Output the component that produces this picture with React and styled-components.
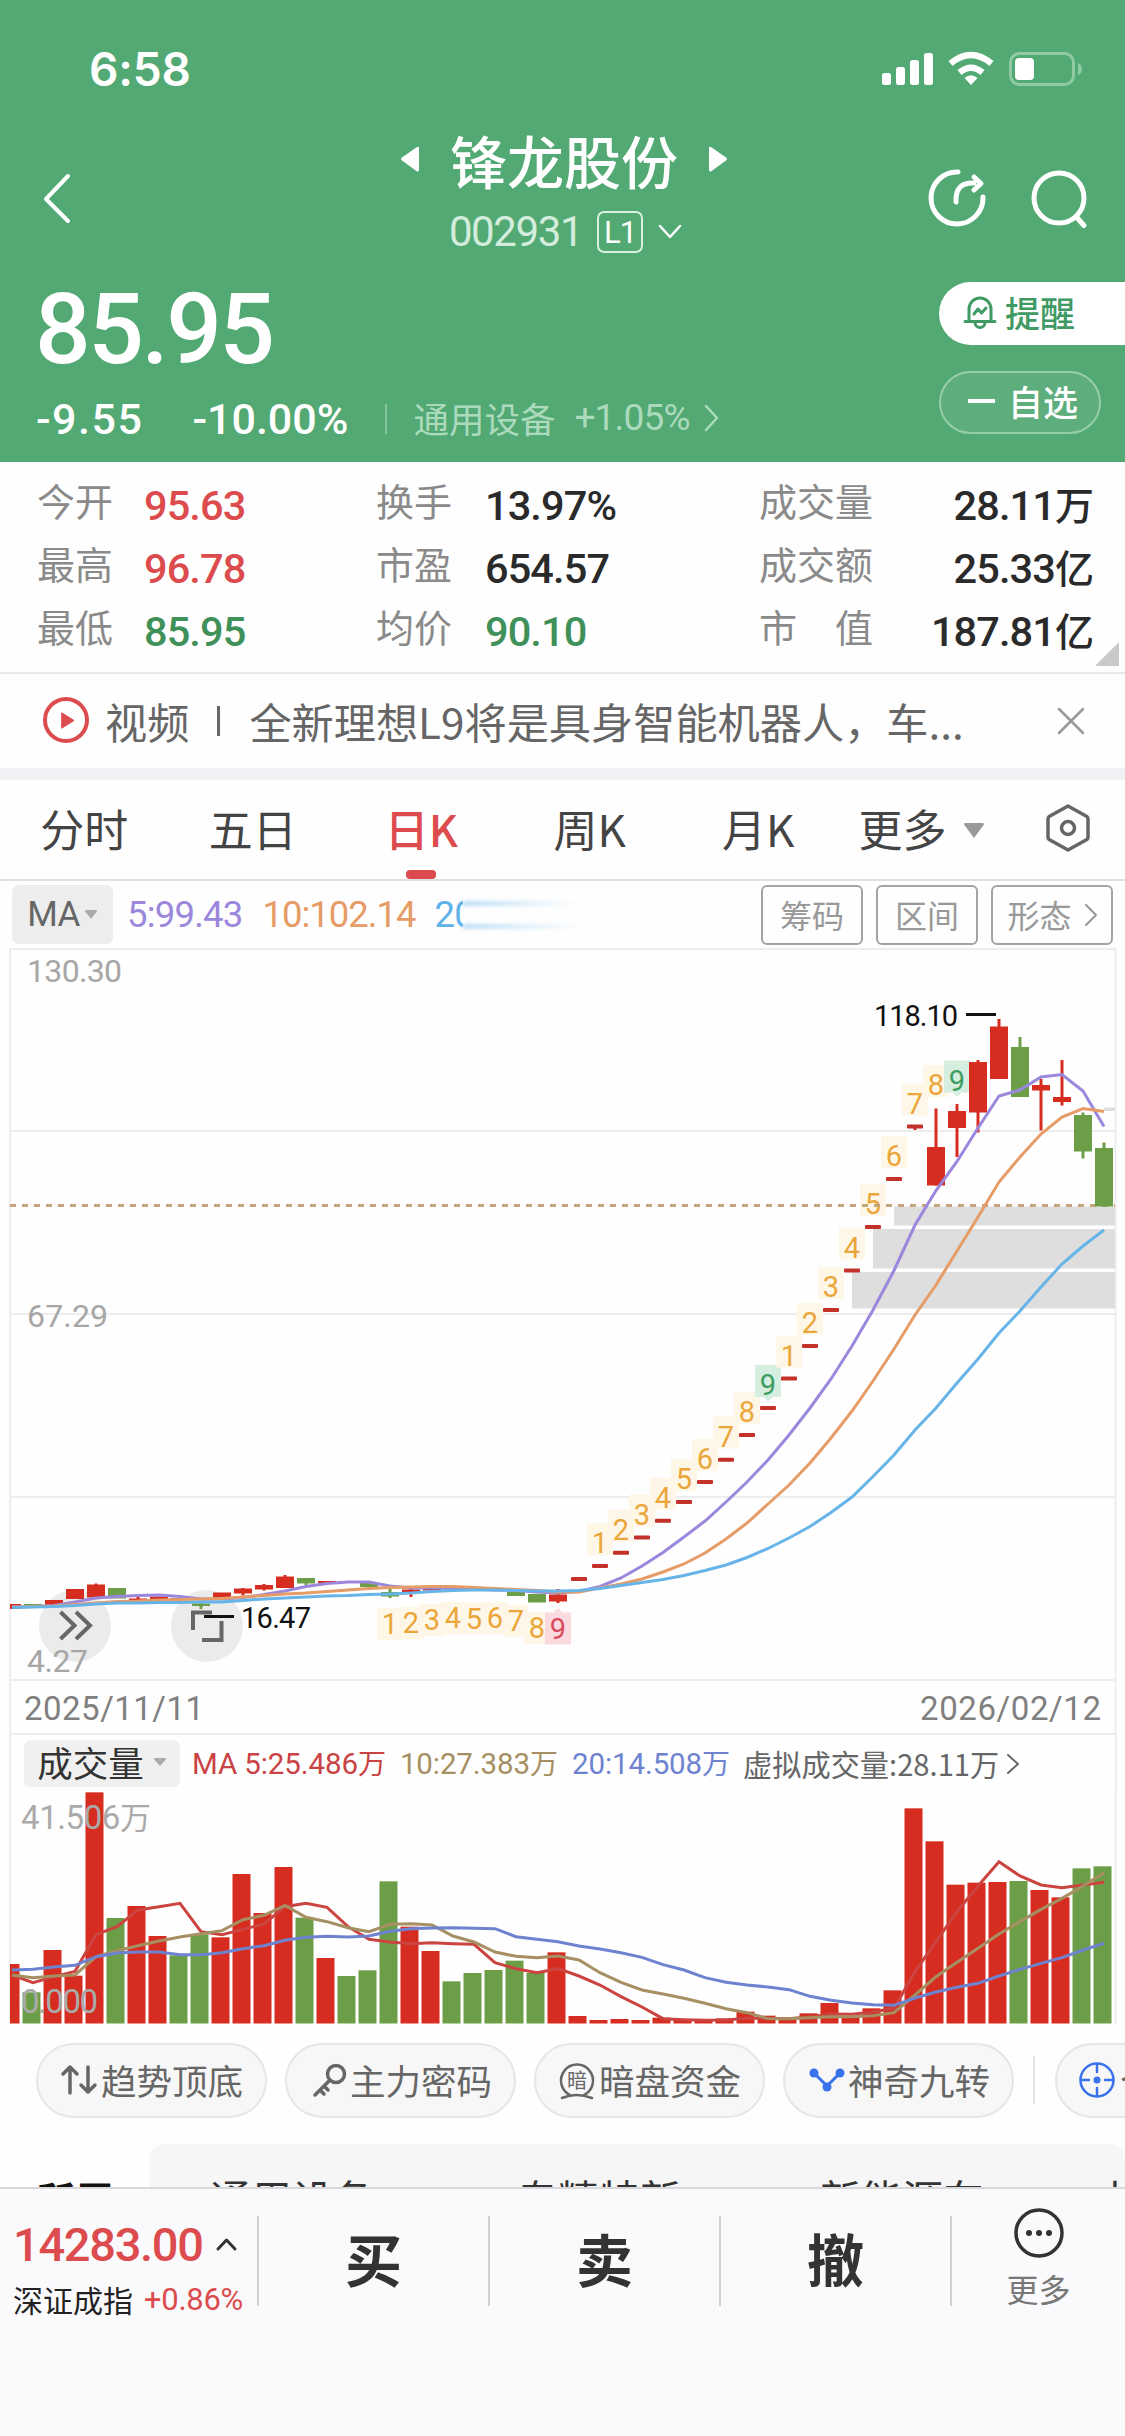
import { styled, createGlobalStyle } from "styled-components";

const GlobalStyle = createGlobalStyle`
  * {
    box-sizing: border-box;
  }
  body {
    margin: 0;
    background: #fefefe;
    font-family: "Noto Sans CJK SC", sans-serif;
  }
`;

const RED = "#d62d20";
const GREEN = "#6c9e48";
const numFont = `Roboto, "Noto Sans CJK SC", sans-serif`;

const Page = styled.div`
  width: 1125px;
  height: 2436px;
  overflow: hidden;
  display: flex;
  flex-direction: column;
`;

const Num = styled.span`
  font-family: ${numFont};
  font-size: ${(p) => p.$size}px;
  font-weight: ${(p) => p.$weight || 400};
  font-stretch: 88%;
  letter-spacing: ${(p) => p.$gap || 0}px;
  color: ${(p) => p.$color || "inherit"};
  line-height: 1;
  white-space: nowrap;
`;

const Unit = styled.span`
  font-size: ${(p) => p.$size}px;
  letter-spacing: 0;
`;

/* ---------- header ---------- */

const Header = styled.header`
  height: 462px;
  flex: none;
  background: #52a973;
  color: #fff;
`;

const StatusBar = styled.div`
  height: 138px;
  display: flex;
  align-items: center;
  justify-content: space-between;
  padding: 0 43px 0 89px;
`;

const Clock = styled.span`
  font-family: Inter, sans-serif;
  font-size: 46px;
  font-weight: 600;
  line-height: 1;
  letter-spacing: -0.2px;
`;

const NavBar = styled.div`
  height: 144px;
  display: grid;
  grid-template-columns: 1fr auto 1fr;
  padding: 0 37px 0 40px;
`;

const NavSide = styled.div`
  height: 120px;
  display: flex;
  align-items: center;
  justify-content: ${(p) => (p.$end ? "flex-end" : "flex-start")};
  gap: 44px;
`;

const NavCenter = styled.div`
  display: flex;
  flex-direction: column;
  align-items: center;
`;

const NavTitle = styled.div`
  height: 42px;
  display: flex;
  align-items: center;
  gap: 30px;
  font-size: 57px;
  font-weight: 500;
  line-height: 42px;
`;

const NavCode = styled.div`
  height: 104px;
  display: flex;
  align-items: center;
  padding-left: 3px;
`;

const Level = styled.span`
  width: 46px;
  height: 42px;
  margin: 0 15px 0 15px;
  border: 2px solid #d9efe1;
  border-radius: 7px;
  display: flex;
  align-items: center;
  justify-content: center;
`;

const Quote = styled.div`
  display: flex;
  justify-content: space-between;
`;

const Price = styled.div`
  height: 96px;
  padding-left: 35px;
  display: flex;
  align-items: center;
`;

const Change = styled.div`
  height: 82px;
  padding-left: 36px;
  display: flex;
  align-items: center;
`;

const Separator = styled.i`
  width: 2px;
  height: ${(p) => p.$height}px;
  background: ${(p) => p.$color};
`;

const Sector = styled.span`
  display: flex;
  align-items: center;
  margin-left: 26px;
  padding-bottom: 3px;
  color: #acdabd;
  font-size: 35.5px;
  line-height: 1;
`;

const Actions = styled.div`
  width: 186px;
  display: flex;
  flex-direction: column;
  gap: 26px;
`;

const Pill = styled.div`
  height: 63px;
  display: flex;
  align-items: center;
  font-size: 35px;
  font-weight: 500;
  line-height: 1;
  padding-bottom: 4px;
`;

const AlertPill = styled(Pill)`
  background: #fff;
  color: #3f9a63;
  border-radius: 32px 0 0 32px;
  padding-left: 24px;
  gap: 8px;
`;

const WatchPill = styled(Pill)`
  width: 162px;
  border: 2px solid #96ceaa;
  background: #5dae7c;
  border-radius: 32px;
  padding-left: 26px;
  gap: 12px;
`;

/* ---------- stats ---------- */

const Stats = styled.section`
  height: 212px;
  flex: none;
  display: grid;
  grid-template-columns: 339px 383px 334px;
  grid-auto-rows: 63px;
  padding: 12px 31px 0 38px;
  border-bottom: 2px solid #e9e9e9;
  position: relative;
`;

const Stat = styled.div`
  display: flex;
  align-items: center;
  justify-content: ${(p) => (p.$spread ? "space-between" : "flex-start")};
`;

const StatLabel = styled.span`
  min-width: ${(p) => p.$width}px;
  margin-left: -1px;
  padding-bottom: 11px;
  font-size: 38px;
  line-height: 1;
  color: #8a8a8a;
  white-space: pre;
`;

const Corner = styled.i`
  position: absolute;
  right: 6px;
  bottom: 6px;
  border: 12px solid #c9c9c9;
  border-top-color: transparent;
  border-left-color: transparent;
`;

/* ---------- news ---------- */

const News = styled.section`
  height: 106px;
  flex: none;
  border-bottom: 12px solid #f1f2f6;
  display: flex;
  align-items: center;
  padding: 0 40px 0 42px;
  color: #666;
  font-size: 42.2px;
  line-height: 1;
`;

const NewsTag = styled.span`
  margin: 0 28px 0 15px;
`;

const NewsText = styled.span`
  flex: 1;
  margin-left: 29px;
  white-space: nowrap;
`;

/* ---------- tabs ---------- */

const Tabs = styled.nav`
  height: 101px;
  flex: none;
  display: flex;
  align-items: stretch;
  border-bottom: 2px solid #e0e0e0;
`;

const Tab = styled.div`
  width: 168.5px;
  display: flex;
  flex-direction: column;
  align-items: center;
  justify-content: space-between;
  padding-top: 23px;
  font-size: 44px;
  line-height: 50px;
  font-weight: ${(p) => (p.$active ? 500 : 400)};
  color: ${(p) => (p.$active ? "#dc4b4d" : "#444")};

  &::after {
    content: "";
    width: 30px;
    height: 9px;
    border-radius: 4px;
    background: ${(p) => (p.$active ? "#dc4b4d" : "transparent")};
  }
`;

const MoreTab = styled.div`
  flex: 1;
  display: flex;
  align-items: center;
  padding: 0 35px 4px 16px;
  font-size: 44px;
  line-height: 50px;
  color: #444;
`;

const Caret = styled.i`
  border: ${(p) => p.$size}px solid transparent;
  border-top: ${(p) => p.$height}px solid ${(p) => p.$color};
  border-bottom: 0;
  border-radius: 3px;
`;

const Grow = styled.span`
  flex: 1;
`;

/* ---------- indicator bar ---------- */

const IndicatorBar = styled.div`
  height: 67px;
  flex: none;
  display: flex;
  align-items: flex-start;
  padding: 4px 12px 0 12px;
`;

const Chip = styled.div`
  width: 101px;
  height: 59px;
  border-radius: 7px;
  background: #ededed;
  display: flex;
  align-items: center;
  justify-content: center;
  gap: 4px;
  color: #666;
`;

const Legend = styled.div`
  flex: 1;
  height: 60px;
  display: flex;
  align-items: center;
`;

const Cut = styled.span`
  width: 28px;
  height: 32px;
  overflow: hidden;
  display: flex;
  align-items: center;
`;

const Smear = styled.span`
  width: 116px;
  height: 26px;
  background:
    linear-gradient(to right, #8cc8f0, transparent) top / 100% 3px no-repeat,
    linear-gradient(to right, #8cc8f0, transparent) bottom / 100% 3px no-repeat;
  filter: blur(2px);
`;

const Tool = styled.div`
  width: ${(p) => p.$width}px;
  height: 60px;
  margin-left: 13px;
  border: 2px solid #a3a3a3;
  border-radius: 6px;
  display: flex;
  align-items: center;
  justify-content: center;
  gap: 13px;
  padding-bottom: 3px;
  font-size: 32px;
  line-height: 1;
  color: #999;
`;

const Svg = styled.svg`
  display: block;
  flex: none;
  overflow: visible;
`;

const ChartSvg = styled(Svg)`
  font-family: ${numFont};
  font-stretch: 88%;
  overflow: hidden;
`;

/* ---------- volume ---------- */

const VolumeBar = styled.div`
  height: 56px;
  flex: none;
  margin: 0 8.5px 0 9px;
  border: solid #ededed;
  border-width: 0 2px;
  display: flex;
  align-items: flex-start;
  padding: 5px 0 0 13px;
`;

const VolumeChip = styled(Chip)`
  width: 156px;
  height: 47px;
  background: #f0f0f0;
  padding-bottom: 3px;
  font-size: 35.5px;
  line-height: 1;
  color: #333;
  gap: 9px;
`;

const VolumeLegend = styled(Legend)`
  height: 50px;
  padding-left: 12px;
`;

const Virtual = styled.span`
  display: flex;
  align-items: center;
  gap: 8px;
  margin-left: 13px;
  padding-bottom: 2px;
  font-size: 29.2px;
  line-height: 1;
  color: #666;
`;

/* ---------- tools ---------- */

const Shortcuts = styled.div`
  height: 120px;
  flex: none;
  display: flex;
  align-items: flex-start;
  gap: 18px;
  padding: 19px 0 0 36px;
  overflow: hidden;
`;

const Shortcut = styled.div`
  width: 231px;
  height: 75px;
  flex: none;
  border: 2px solid #e6e6e6;
  border-radius: 38px;
  background: #f7f7f7;
  display: flex;
  align-items: center;
  padding: 0 0 2px 23px;
  font-size: 35.5px;
  line-height: 1;
  color: #666;
`;

const ShortcutDivider = styled.i`
  width: 2px;
  height: 48px;
  flex: none;
  margin: 13px 2px 0 1px;
  background: #e3e3e3;
`;

const Concepts = styled.div`
  height: 43px;
  flex: none;
  display: flex;
  overflow: hidden;
`;

const ConceptTitle = styled.div`
  width: 150px;
  padding: 29px 0 0 36px;
  font-size: 39px;
  font-weight: 700;
  line-height: 50px;
  color: #111;
`;

const ConceptList = styled.div`
  width: 975px;
  flex: none;
  height: 100px;
  border-radius: 14px 14px 0 0;
  background: #f6f6f7;
  display: grid;
  grid-template-columns: 307px 303px 288px 100px;
  padding: 28px 0 0 60px;
  font-size: 41px;
  line-height: 50px;
  color: #333;
`;

/* ---------- bottom bar ---------- */

const BottomBar = styled.footer`
  flex: 1;
  border-top: 2px solid #d9d9db;
  background: #fafafc;
  display: flex;
  align-items: flex-start;
  padding-top: 27px;
`;

const Index = styled.div`
  width: 259px;
  height: 90px;
  padding-left: 13px;
  border-right: 2px solid #d0d0d2;
`;

const IndexValue = styled.div`
  height: 56px;
  display: flex;
  align-items: center;
  gap: 13px;
`;

const IndexName = styled.div`
  height: 54px;
  display: flex;
  align-items: center;
  gap: 11px;
  font-size: 30px;
  line-height: 1;
  color: #222;
`;

const Trade = styled.div`
  width: 231px;
  height: 90px;
  border-right: 2px solid #d0d0d2;
  text-align: center;
  font-size: 57px;
  font-weight: 700;
  line-height: 82px;
  color: #333;
`;

const More = styled.div`
  flex: 1;
  display: flex;
  flex-direction: column;
  align-items: center;
  margin-top: -8px;
  gap: 12px;
  font-size: 32px;
  line-height: 36px;
  color: #777;
`;

/* ---------- data ---------- */

// x of the i-th trading day
const dayX = (i) => 12 + i * 21;

// [up, bodyTop, bodyBottom, high, low]
const candles = [
  [1, 1604, 1609], [0, 1604, 1606], [1, 1600, 1605.5], [1, 1589, 1599],
  [1, 1584.5, 1597.5, 1583.5, 1598], [0, 1588, 1598.5], [1, 1598.5, 1600.5, 1596.5, 1600.5],
  [1, 1596.5, 1599], [1, 1598, 1600], [0, 1603.5, 1606, 1603, 1609], [1, 1592.5, 1597.5],
  [1, 1588.5, 1593.5, 1588, 1595.5], [1, 1585, 1589.5, 1584, 1590.5],
  [1, 1576.5, 1588, 1575, 1588], [0, 1578, 1583.5, 1578, 1585.5], [1, 1581, 1583],
  [1, 1581.5, 1583], [0, 1583, 1587], [0, 1592, 1596.5, 1589, 1598],
  [1, 1589.5, 1592, 1589, 1597], [1, 1588.5, 1590.5], [1, 1587.5, 1589.5], [0, 1588.5, 1590.5],
  [0, 1589, 1591], [0, 1591.5, 1596], [0, 1594, 1602.5],
  [1, 1594.5, 1601.5, 1589, 1603],
];

// one-price limit-up days, drawn as short dashes
const limitUps = [
  1579, 1566, 1552.7, 1537.5, 1520.7, 1502, 1482, 1459.7, 1435, 1408, 1378.5,
  1346, 1310, 1270.5, 1227, 1179, 1126.5,
];

const lateCandles = [
  [1, 1147, 1185.5, 1108.5, 1185.5], [1, 1111, 1128, 1104, 1157],
  [1, 1062, 1112.5, 1060, 1132.5], [1, 1026.5, 1079, 1019, 1079],
  [0, 1047, 1097, 1037, 1097], [1, 1085, 1090.5, 1079, 1130.5],
  [1, 1097, 1102, 1060, 1105.5], [0, 1115, 1151.5, 1112.5, 1158.5],
  [0, 1148, 1206.5, 1142.5, 1206.5],
];

const priceLines = [
  {
    color: "#9b87dc",
    points: [
      1607, 1606.5, 1605.5, 1602, 1598, 1596.5, 1595.5, 1595, 1596.5, 1599, 1599, 1597.5,
      1594.5, 1591, 1586.5, 1583.5, 1582, 1582, 1586, 1588, 1588, 1588, 1589, 1590, 1590.5,
      1592, 1593, 1591.5, 1586.5, 1578, 1566, 1552.5, 1537, 1521, 1502, 1482, 1460, 1435,
      1408, 1379, 1346, 1310, 1270.5, 1225, 1190.5, 1161.5, 1128, 1096, 1090, 1077, 1074.5,
      1091, 1126.5,
    ],
  },
  {
    color: "#e69c66",
    points: [
      1607, 1606.5, 1606, 1604.5, 1603, 1601.5, 1601, 1600, 1599.5, 1599, 1598.5, 1597,
      1595.5, 1594, 1593, 1591.5, 1590, 1588.5, 1587.5, 1587, 1586.5, 1586.5, 1587.5, 1588.5,
      1589.5, 1590.5, 1592, 1592, 1588, 1584, 1579, 1572, 1564, 1553, 1539, 1523, 1504,
      1485, 1463, 1438, 1411, 1381, 1349, 1315, 1285, 1251, 1217, 1182, 1157, 1134, 1117,
      1108.5, 1111.5,
    ],
  },
  {
    color: "#66b4e8",
    points: [
      1607.5, 1607, 1606.5, 1605.5, 1604, 1603, 1603, 1602.5, 1602.5, 1602, 1602, 1600.5,
      1599, 1598, 1597, 1596, 1595.5, 1594.5, 1594, 1593, 1591.5, 1590.5, 1590, 1590, 1590.5,
      1591, 1591, 1590.5, 1588.5, 1585.5, 1582.5, 1579.5, 1575.5, 1570.5, 1565, 1557.5,
      1548.5, 1538, 1526.5, 1512.5, 1497, 1476.5, 1455, 1430, 1408, 1383, 1359, 1333, 1311,
      1287, 1264, 1246, 1230,
    ],
  },
];

const lowerMarks = [1625, 1624, 1621, 1619, 1619.5, 1619, 1622, 1629, 1629.5];

// bar tops in thirds of a pixel below y=1730, g marks a falling day
const volumes =
  "702 787g 660 737 187 564g 528 618 676g 613g 622 432 549 411 563g 684 738g 721g 454g 590 663 754g 729g 720g 692g 729g 667 858 870 867 870 863 867 869 865 845 857 868 850 819 859 835 781 235 334 464 458 456 453g 480 502 415g 409g".split(
    " "
  );

const volumeLines = [
  {
    color: "#cc4440",
    points: [
      735, 758, 740, 724, 614, 590, 540, 530, 520, 605, 614, 598, 582, 530, 520, 532, 590, 628,
      636, 641, 638, 641, 643, 698, 716, 728, 716, 738, 765, 800, 831, 866, 869, 871, 870, 865,
      865, 866, 860, 852, 853, 846, 835, 725, 635, 545, 468, 395, 438, 465, 473, 465, 457,
    ],
  },
  {
    color: "#a68f62",
    points: [
      735, 743, 738, 735, 680, 662, 647, 633, 621, 611, 602, 569, 556, 526, 562, 575, 593, 605,
      583, 581, 585, 618, 636, 666, 679, 683, 678, 690, 728, 757, 780, 792, 805, 820, 836, 848,
      866, 866, 863, 860, 860, 857, 848, 795, 740, 697, 655, 612, 575, 538, 505, 468, 428,
    ],
  },
  {
    color: "#6d83d0",
    points: [
      720, 718, 711, 706, 680, 669, 666, 666, 674, 674, 668, 656, 647, 631, 622, 619, 621, 618,
      604, 596, 594, 593, 595, 596, 620, 628, 635, 648, 657, 668, 682, 704, 720, 743, 757, 765,
      771, 779, 799, 811, 819, 824, 826, 804, 786, 772, 760, 738, 718, 700, 683, 660, 640,
    ],
  },
];

const stats = [
  { label: "今开", value: "95.63", color: "#dc4b4d" },
  { label: "换手", value: "13.97%" },
  { label: "成交量", value: "28.11", unit: "万" },
  { label: "最高", value: "96.78", color: "#dc4b4d" },
  { label: "市盈", value: "654.57" },
  { label: "成交额", value: "25.33", unit: "亿" },
  { label: "最低", value: "85.95", color: "#3f9059" },
  { label: "均价", value: "90.10", color: "#3f9059" },
  { label: "市　值", value: "187.81", unit: "亿" },
];

/* ---------- icons ---------- */

const Stroke = ({ w, h, width = 4, color = "currentColor", children }) => (
  <Svg
    width={w}
    height={h}
    viewBox={`0 0 ${w} ${h}`}
    fill="none"
    stroke={color}
    strokeWidth={width}
    strokeLinecap="round"
    strokeLinejoin="round"
  >
    {children}
  </Svg>
);

const StatusIcons = () => (
  <Svg width="201" height="34" viewBox="881 52 201 34" fill="#fff">
    <rect x="882" y="73" width="9" height="12" rx="2.5" />
    <rect x="896" y="67" width="9" height="18" rx="2.5" />
    <rect x="910" y="60" width="9" height="25" rx="2.5" />
    <rect x="924" y="53" width="9" height="32" rx="2.5" />
    <path d="M971 85l-6.500-7q6.500-5.500 13 0z" />
    <path d="M959.500 72.500q11.500-9.500 23 0" fill="none" stroke="#fff" strokeWidth="6.500" />
    <path d="M950.500 63.500q20.500-17 41 0" fill="none" stroke="#fff" strokeWidth="6.500" />
    <rect x="1010.500" y="53.500" width="63" height="31" rx="9" fill="none" stroke="#8fcaa5" strokeWidth="3" />
    <rect x="1015" y="58" width="19" height="22" rx="4" />
    <path d="M1078 63q4 1.500 4 6t-4 6z" fill="#8fcaa5" />
  </Svg>
);

const Bell = () => (
  <Stroke w={34} h={36} width={3}>
    <path d="M2 27.500h30M6 27V15a11 11 0 0 1 22 0v12M12 28.500a5 5 0 0 0 10 0" />
    <path d="M11 20l4-5 3.500 4 4.500-5" />
  </Stroke>
);

/* ---------- charts ---------- */

const linePoints = (points, toY = (y) => y) => points.map((y, i) => `${dayX(i)},${toY(y)}`).join(" ");

const Candle = ({ day, data: [up, top, bottom, high, low] }) => {
  const x = dayX(day);
  const color = up ? RED : GREEN;
  return (
    <g fill={color}>
      {high && <rect x={x - 1.5} y={high} width="3" height={low - high} />}
      <rect x={x - 9} y={top} width="18" height={bottom - top} />
    </g>
  );
};

const Mark = ({ day, y, n, nine, low }) => {
  const x = dayX(day);
  const color = n === 9 ? nine[0] : "#eba63a";
  const bg = n === 9 ? nine[1] : "#fef6e7";
  return (
    <g>
      <rect x={x - 13} y={y - 17} width="26" height="32" fill={bg} />
      {n === 9 && <path d={low ? `M${x - 5} ${y - 17}l5-4 5 4z` : `M${x - 5} ${y + 15}l5 4 5-4z`} fill={bg} />}
      <text x={x} y={low ? y + 9 : y + 13} fontSize="29" textAnchor="middle" fill={color}>
        {n}
      </text>
    </g>
  );
};

const upperNumbers = [1, 2, 3, 4, 5, 6, 7, 8, 9, 1, 2, 3, 4, 5, 6, 7];

const PriceChart = () => (
  <ChartSvg width="1125" height="787" viewBox="0 948 1125 787">
    <g stroke="#ededed" strokeWidth="2">
      <path d="M10 1735V949H1115.500V1735" fill="none" />
      <path d="M10 1131H1115M10 1314H1115M10 1497H1115M10 1680H1115M10 1734H1115" />
    </g>
    <g fill="#dedede">
      <rect x="894" y="1206.500" width="221" height="19" />
      <rect x="873" y="1229" width="242" height="39.500" />
      <rect x="852" y="1272" width="263" height="36.500" />
      <rect x="1104" y="1107.500" width="11" height="3.500" />
    </g>
    <circle cx="75" cy="1626" r="36" fill="#ebebeb" />
    <circle cx="207" cy="1626" r="36" fill="#ebebeb" />

    {upperNumbers.map((n, i) => (
      <Mark key={i} day={28 + i} y={limitUps[i + 1] - 26} n={n} nine={["#3d9d60", "#d5eee0"]} />
    ))}
    <Mark day={44} y={1082} n={8} nine={[]} />
    <Mark day={45} y={1077.5} n={9} nine={["#3d9d60", "#d5eee0"]} />
    {lowerMarks.map((y, i) => (
      <Mark key={i} day={18 + i} y={y} n={i + 1} nine={["#d84a5c", "#fadadf"]} low />
    ))}

    <line x1="10" x2="1115" y1="1205.500" y2="1205.500" stroke="#c4a57c" strokeWidth="3" strokeDasharray="6 6" />

    <svg x="10" y="948" width="1105" height="787" viewBox="10 948 1105 787">
      {candles.map((c, i) => (
        <Candle key={i} day={i} data={c} />
      ))}
      {limitUps.map((y, i) => (
        <rect key={i} x={dayX(27 + i) - 8} y={y - 2} width="16" height="4" rx="1" fill="#c4302a" />
      ))}
      <rect x="913.500" y="1126" width="3" height="4" fill="#c4302a" />
      {lateCandles.map((c, i) => (
        <Candle key={i} day={44 + i} data={c} />
      ))}
      {priceLines.map((l) => (
        <polyline key={l.color} points={linePoints(l.points)} fill="none" stroke={l.color} strokeWidth="3" />
      ))}
    </svg>

    <g fill="none" stroke="#666" strokeWidth="4">
      <path d="M60.500 1612l14 13.500-14 13.500M76 1612l14 13.500-14 13.500" />
      <path d="M193 1630v-17.500h19M202 1640h19.500v-19" />
    </g>
    <path d="M966 1014.500h30M204 1616.500h30" stroke="#111" strokeWidth="3" />
    <g fontSize="29" fill="#111">
      <text x="874" y="1025.500" textLength="84">118.10</text>
      <text x="241" y="1628" textLength="70">16.47</text>
    </g>
    <g fontSize="32" fill="#a6a6a6">
      <text x="27" y="981.500" textLength="95">130.30</text>
      <text x="27" y="1326.500" textLength="81">67.29</text>
      <text x="27" y="1671.500" textLength="61">4.27</text>
    </g>
    <g fontSize="33" fill="#808080">
      <text x="24" y="1720" textLength="180">2025/11/11</text>
      <text x="920" y="1720" textLength="181">2026/02/12</text>
    </g>
  </ChartSvg>
);

const VolumeChart = () => (
  <ChartSvg width="1125" height="233" viewBox="0 1791 1125 233">
    <path d="M10 1791V2024M1115.500 1791V2024" stroke="#ededed" strokeWidth="2" />
    <svg x="10" y="1791" width="1105" height="233" viewBox="10 1791 1105 233">
      {volumes.map((v, i) => {
        const top = 1730 + parseInt(v, 10) / 3;
        return (
          <rect
            key={i}
            x={dayX(i) - 10.5}
            y={top}
            width="18"
            height={2023.5 - top}
            fill={v.endsWith("g") ? GREEN : RED}
          />
        );
      })}
      {volumeLines.map((l) => (
        <polyline
          key={l.color}
          points={linePoints(l.points, (y) => 1730 + y / 3)}
          fill="none"
          stroke={l.color}
          strokeWidth="3"
        />
      ))}
    </svg>
    <g fontSize="33" fill="#aaa">
      <text x="21" y="1828.500" textLength="130">
        41.506<tspan fontSize="31">万</tspan>
      </text>
      <text x="21" y="2013" textLength="77">0.000</text>
    </g>
  </ChartSvg>
);

export default function App() {
  return (
    <Page>
      <GlobalStyle />
      <Header>
        <StatusBar>
          <Clock>6:58</Clock>
          <StatusIcons />
        </StatusBar>
        <NavBar>
          <NavSide>
            <Stroke w={30} h={50}>
              <path d="M28 3L6 26l22 22" />
            </Stroke>
          </NavSide>
          <NavCenter>
            <NavTitle>
              <Svg width="20" height="26" fill="#fff">
                <path d="M2 11.500Q0 13 2 14.500L17 25.500Q19 26 19 24V2Q19 0 17 1z" />
              </Svg>
              锋龙股份
              <Svg width="20" height="26" fill="#fff">
                <path d="M18 11.500Q20 13 18 14.500L3 25.500Q1 26 1 24V2Q1 0 3 1z" />
              </Svg>
            </NavTitle>
            <NavCode>
              <Num $size={42} $gap={-1.4} $color="#d3ecdc">002931</Num>
              <Level>
                <Num $size={31} $gap={-1}>L1</Num>
              </Level>
              <Stroke w={24} h={14} width={2.5}>
                <path d="M2 1l10 11L22 1" />
              </Stroke>
            </NavCode>
          </NavCenter>
          <NavSide $end>
            <Stroke w={58} h={58} width={5}>
              <path d="M30 3A26 26 0 1 0 55 28" />
              <path d="M28 33q-1-20 18-19M46 8l7 6.500-7 6.500" />
            </Stroke>
            <Stroke w={58} h={58} width={5}>
              <circle cx="29" cy="29" r="25" />
              <path d="M46 47.500l8 9" />
            </Stroke>
          </NavSide>
        </NavBar>
        <Quote>
          <div>
            <Price>
              <Num $size={98} $weight={500} $gap={-2.5}>85.95</Num>
            </Price>
            <Change>
              <Num $size={43} $weight={500} $gap={1.5}>-9.55</Num>
              <Num $size={43} $weight={500} $gap={0} style={{ marginLeft: 49 }}>-10.00%</Num>
              <Separator $height={30} $color="#86c49c" style={{ marginLeft: 37 }} />
              <Sector>
                通用设备
                <Num $size={37} $gap={-0.8} style={{ margin: "0 14px 0 19px" }}>+1.05%</Num>
                <Stroke w={15} h={26} width={2.5}>
                  <path d="M2 1l11 12L2 25" />
                </Stroke>
              </Sector>
            </Change>
          </div>
          <Actions>
            <AlertPill>
              <Bell />
              提醒
            </AlertPill>
            <WatchPill>
              <Stroke w={29} h={4}>
                <path d="M1 2h27" strokeLinecap="butt" />
              </Stroke>
              自选
            </WatchPill>
          </Actions>
        </Quote>
      </Header>

      <Stats>
        {stats.map((s, i) => (
          <Stat key={s.label} $spread={i % 3 === 2}>
            <StatLabel $width={i % 3 === 0 ? 107 : 109}>{s.label}</StatLabel>
            <Num $size={41.5} $weight={500} $gap={-0.9} $color={s.color || "#2a2a2a"}>
              {s.value}
              {s.unit && <Unit $size={39}>{s.unit}</Unit>}
            </Num>
          </Stat>
        ))}
        <Corner />
      </Stats>

      <News>
        <Stroke w={48} h={48} width={4} color="#dc4b4d">
          <circle cx="24" cy="23" r="21" />
          <path d="M20 16l12 7.500-12 7.500z" fill="#dc4b4d" strokeWidth="1" />
        </Stroke>
        <NewsTag>视频</NewsTag>
        <Separator $height={30} $color="#666" style={{ width: 3 }} />
        <NewsText>全新理想L9将是具身智能机器人，车...</NewsText>
        <Stroke w={28} h={28} width={2.5} color="#999">
          <path d="M2 2l24 24M26 2L2 26" />
        </Stroke>
      </News>

      <Tabs>
        <Tab>分时</Tab>
        <Tab>五日</Tab>
        <Tab $active>日K</Tab>
        <Tab>周K</Tab>
        <Tab>月K</Tab>
        <MoreTab>
          更多
          <Caret $size={11} $height={15} $color="#999" style={{ marginLeft: 16, marginTop: 6 }} />
          <Grow />
          <Stroke w={44} h={48} width={3.5} color="#666">
            <path d="M22 2l18 10q2 1 2 3v18q0 2-2 3L22 46 4 36q-2-1-2-3V15q0-2 2-3z" />
            <circle cx="22" cy="24" r="6.500" />
          </Stroke>
        </MoreTab>
      </Tabs>

      <IndicatorBar>
        <Chip>
          <Num $size={35} $gap={-0.5}>MA</Num>
          <Caret $size={7} $height={9} $color="#aaa" />
        </Chip>
        <Legend>
          <Num $size={36.5} $gap={-0.8} $color="#9b87dc" style={{ marginLeft: 14 }}>5:99.43</Num>
          <Num $size={36.5} $gap={-1} $color="#e69c66" style={{ marginLeft: 20 }}>10:102.14</Num>
          <Cut style={{ marginLeft: 19 }}>
            <Num $size={36.5} $gap={-0.7} $color="#5eb2e8">20</Num>
          </Cut>
          <Smear />
        </Legend>
        <Tool $width={102}>筹码</Tool>
        <Tool $width={102}>区间</Tool>
        <Tool $width={122}>
          形态
          <Stroke w={12} h={22} width={2}>
            <path d="M1 2l10 10L1 22" />
          </Stroke>
        </Tool>
      </IndicatorBar>

      <PriceChart />

      <VolumeBar>
        <VolumeChip>
          成交量
          <Caret $size={7} $height={8} $color="#aaa" />
        </VolumeChip>
        <VolumeLegend>
          <Num $size={29.5} $gap={-0.1} $color="#c94244">
            MA 5:25.486<Unit $size={28}>万</Unit>
          </Num>
          <Num $size={29.5} $gap={-0.1} $color="#a68f62" style={{ marginLeft: 14 }}>
            10:27.383<Unit $size={28}>万</Unit>
          </Num>
          <Num $size={29.5} $gap={-0.1} $color="#6d83d0" style={{ marginLeft: 14 }}>
            20:14.508<Unit $size={28}>万</Unit>
          </Num>
          <Virtual>
            虚拟成交量:28.11万
            <Stroke w={12} h={20} width={2}>
              <path d="M1 1l10 9-10 9" />
            </Stroke>
          </Virtual>
        </VolumeLegend>
      </VolumeBar>
      <VolumeChart />

      <Shortcuts>
        <Shortcut>
          <Stroke w={40} h={32} width={3.5}>
            <path d="M9 29V4M2 10l7-7 7 7M27 3v25M20 21l7 7 7-7" />
          </Stroke>
          趋势顶底
        </Shortcut>
        <Shortcut>
          <Stroke w={40} h={36} width={3.5}>
            <circle cx="26" cy="12" r="8.500" />
            <path d="M20 18L5 33M10 28l4 4M14 24l4 4" />
          </Stroke>
          主力密码
        </Shortcut>
        <Shortcut>
          <Stroke w={40} h={38} width={2.5}>
            <path d="M11 34A16 16 0 1 1 25 34M3 37q14-6 30 0" />
            <text x="18" y="27" fontSize="20" textAnchor="middle" fill="#666" stroke="none">
              暗
            </text>
          </Stroke>
          暗盘资金
        </Shortcut>
        <Shortcut>
          <Stroke w={40} h={28} width={3} color="#3a72ec">
            <path d="M6 7l13 13L32 7" />
            <g fill="#3a72ec" stroke="none">
              <circle cx="6" cy="7" r="4.500" />
              <circle cx="19" cy="21" r="4.500" />
              <circle cx="32" cy="7" r="4.500" />
            </g>
          </Stroke>
          神奇九转
        </Shortcut>
        <ShortcutDivider />
        <Shortcut>
          <Stroke w={40} h={36} width={2.5} color="#3a72ec">
            <circle cx="17" cy="18" r="16.500" />
            <path d="M17 2v8M17 26v8M1 18h8M25 18h8" />
            <circle cx="17" cy="18" r="3.500" fill="#3a72ec" stroke="none" />
          </Stroke>
          个股
        </Shortcut>
      </Shortcuts>

      <Concepts>
        <ConceptTitle>所属</ConceptTitle>
        <ConceptList>
          <span>通用设备</span>
          <span>专精特新</span>
          <span>新能源车</span>
          <span>比</span>
        </ConceptList>
      </Concepts>

      <BottomBar>
        <Index>
          <IndexValue>
            <Num $size={47} $weight={500} $gap={-1.3} $color="#dc4b4d">14283.00</Num>
            <Stroke w={21} h={12} width={3} color="#333">
              <path d="M2 11l8.500-9L19 11" />
            </Stroke>
          </IndexValue>
          <IndexName>
            深证成指
            <Num $size={31} $gap={-0.3} $color="#dc4b4d">+0.86%</Num>
          </IndexName>
        </Index>
        <Trade>买</Trade>
        <Trade>卖</Trade>
        <Trade>撤</Trade>
        <More>
          <Stroke w={50} h={50} width={3.5} color="#333">
            <circle cx="25" cy="25" r="23" />
            <g fill="#333" stroke="none">
              <circle cx="15" cy="25" r="3" />
              <circle cx="25" cy="25" r="3" />
              <circle cx="35" cy="25" r="3" />
            </g>
          </Stroke>
          更多
        </More>
      </BottomBar>
    </Page>
  );
}
